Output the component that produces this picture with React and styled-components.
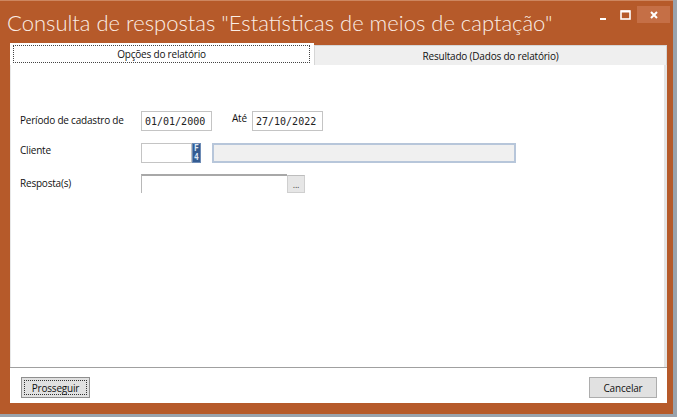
import styled, { createGlobalStyle } from 'styled-components'

const GlobalStyle = createGlobalStyle`
  html, body {
    margin: 0;
    padding: 0;
    background: #9aa3ad;
  }
  body {
    width: 677px;
    height: 417px;
    overflow: hidden;
  }
`

const Window = styled.div`
  width: 673px;
  height: 414px;
  box-sizing: border-box;
  background: #b65a2a;
  border-top: 1px solid #cd8660;
  display: flex;
  flex-direction: column;
  font-family: 'Open Sans', 'Noto Sans', sans-serif;
  font-size: 10px;
  letter-spacing: -0.2px;
`

const TitleBar = styled.div`
  height: 42px;
  display: flex;
  align-items: flex-start;
`

const Title = styled.h1`
  flex: 1;
  min-width: 0;
  margin: 0;
  padding: 8px 0 0 7px;
  font-family: Lato, 'Open Sans', sans-serif;
  font-weight: 300;
  font-size: 22px;
  letter-spacing: 0;
  line-height: 28px;
  color: #fbeee6;
  white-space: nowrap;
`

const Controls = styled.div`
  display: flex;
  align-items: flex-start;
  padding: 5px 3px 0 0;
`

const ControlButton = styled.div`
  width: ${(p) => p.$w}px;
  height: 17px;
  display: flex;
  align-items: center;
  justify-content: center;
  background: ${(p) => (p.$close ? '#c56f46' : 'transparent')};
`

const ClientArea = styled.div`
  flex: 1;
  margin: 0 6px 11px 10px;
  display: flex;
  flex-direction: column;
`

const TabStrip = styled.div`
  height: 22px;
  display: flex;
  align-items: flex-end;
`

const ActiveTab = styled.div`
  width: 304px;
  height: 22px;
  box-sizing: border-box;
  background: #fff;
  padding: 2px 4px 2px 3px;
  display: flex;
`

const FocusRect = styled.div`
  flex: 1;
  border: 1px dotted #444;
  display: flex;
  align-items: center;
  justify-content: center;
  color: #111;
`

const Tab = styled.div`
  flex: 1;
  height: 20px;
  box-sizing: border-box;
  background: #efefef;
  border: 1px solid #d6d6d6;
  border-bottom: none;
  display: flex;
  align-items: center;
  justify-content: center;
  color: #111;
`

const TabPage = styled.div`
  flex: 1;
  background: #fff;
  border-left: 1px solid #e8e8e8;
  border-right: 3px solid #e4e4e4;
  padding: 46px 0 0 9px;
  display: flex;
  flex-direction: column;
`

const Row = styled.div`
  display: flex;
  align-items: flex-start;
  margin-top: ${(p) => p.$top || 0}px;
`

const Label = styled.span`
  width: ${(p) => p.$w || 121}px;
  margin-left: ${(p) => p.$left || 0}px;
  margin-top: ${(p) => p.$dy || 0}px;
  line-height: 16px;
  color: #111;
  white-space: nowrap;
`

const TextBox = styled.div`
  width: ${(p) => p.$w}px;
  height: 20px;
  box-sizing: border-box;
  border: 1px solid #c4c4c4;
  background: #fff;
  padding: 0 3px;
  display: flex;
  align-items: center;
  font-family: 'DejaVu Sans Mono', 'Liberation Mono', monospace;
  font-size: 10px;
  letter-spacing: 0;
  color: #222;
`

const DisabledBox = styled(TextBox)`
  margin-left: 11px;
  background: #f0f0f0;
  border: 2px solid #b7c6da;
`

const KeyHint = styled.div`
  width: 9px;
  height: 20px;
  box-sizing: border-box;
  background: #345c92;
  border: 1px solid #6d8bb5;
  display: flex;
  flex-direction: column;
  align-items: center;
  justify-content: center;
  font-family: 'DejaVu Sans Mono', monospace;
  font-weight: bold;
  font-size: 8px;
  letter-spacing: 0;
  line-height: 9px;
  color: #dfe8f5;
`

const PickerBox = styled.div`
  width: 146px;
  height: 19px;
  box-sizing: border-box;
  border-top: 2px solid #a8a8a8;
  border-left: 1px solid #b8b8b8;
  background: #fff;
`

const DotsButton = styled.div`
  width: 18px;
  height: 18px;
  margin-top: 1px;
  box-sizing: border-box;
  background: #e6e6e6;
  border: 1px solid #cfcfcf;
  border-top-color: #bdbdbd;
  display: flex;
  align-items: flex-end;
  justify-content: center;
  padding-bottom: 3px;
  font-size: 9px;
  line-height: 8px;
  color: #444;
`

const Separator = styled.div`
  height: 1px;
  background: #a0a0a0;
`

const ButtonBar = styled.div`
  height: 35px;
  background: #fff;
  box-sizing: border-box;
  padding: 9px 10px 0 11px;
  display: flex;
  align-items: flex-start;
  justify-content: space-between;
`

const Button = styled.div`
  width: ${(p) => p.$w}px;
  height: 21px;
  box-sizing: border-box;
  background: #e1e1e1;
  border: 1px solid ${(p) => (p.$default ? '#8f8f8f' : '#adadad')};
  padding: 2px;
  display: flex;
  color: #111;
`

const ButtonFace = styled.div`
  flex: 1;
  border: 1px dotted ${(p) => (p.$focus ? '#333' : 'transparent')};
  display: flex;
  align-items: center;
  justify-content: center;
`

export default function App() {
  return (
    <>
      <GlobalStyle />
      <Window>
        <TitleBar>
          <Title>Consulta de respostas "Estatísticas de meios de captação"</Title>
          <Controls>
            <ControlButton $w={23}>
              <svg width="8" height="17" viewBox="0 0 8 17">
                <rect x="1" y="12" width="6" height="2" fill="#fff" />
              </svg>
            </ControlButton>
            <ControlButton $w={23}>
              <svg width="11" height="10" viewBox="0 0 11 10">
                <rect x="1" y="1" width="9" height="8" fill="none" stroke="#fff" strokeWidth="1.6" />
                <rect x="1" y="0.5" width="9" height="2" fill="#fff" />
              </svg>
            </ControlButton>
            <ControlButton $w={33} $close>
              <svg width="10" height="10" viewBox="0 0 10 10">
                <path d="M2 2 L8 8 M8 2 L2 8" stroke="#fff" strokeWidth="2" />
              </svg>
            </ControlButton>
          </Controls>
        </TitleBar>
        <ClientArea>
          <TabStrip>
            <ActiveTab>
              <FocusRect>Opções do relatório</FocusRect>
            </ActiveTab>
            <Tab>Resultado (Dados do relatório)</Tab>
          </TabStrip>
          <TabPage>
            <Row>
              <Label $dy={1}>Período de cadastro de</Label>
              <TextBox $w={71}>01/01/2000</TextBox>
              <Label $w={20} $left={20} $dy={-1}>Até</Label>
              <TextBox $w={71}>27/10/2022</TextBox>
            </Row>
            <Row $top={12}>
              <Label $dy={-1}>Cliente</Label>
              <TextBox $w={51} />
              <KeyHint>
                <span>F</span>
                <span>4</span>
              </KeyHint>
              <DisabledBox $w={304} />
            </Row>
            <Row $top={11}>
              <Label $dy={1}>Resposta(s)</Label>
              <PickerBox />
              <DotsButton>...</DotsButton>
            </Row>
          </TabPage>
          <Separator />
          <ButtonBar>
            <Button $w={69} $default>
              <ButtonFace $focus>Prosseguir</ButtonFace>
            </Button>
            <Button $w={68}>
              <ButtonFace>Cancelar</ButtonFace>
            </Button>
          </ButtonBar>
        </ClientArea>
      </Window>
    </>
  )
}
